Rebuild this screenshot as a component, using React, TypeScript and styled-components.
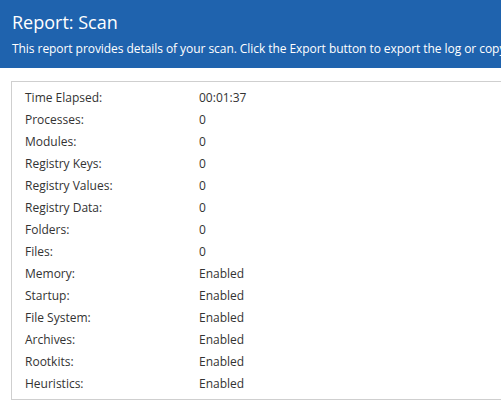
import styled, { createGlobalStyle } from 'styled-components';

const Global = createGlobalStyle`
  html, body {
    margin: 0;
    padding: 0;
    background: #fff;
    overflow: hidden;
  }
  body {
    font-family: "Open Sans", "DejaVu Sans", sans-serif;
  }
`;

const Page = styled.div`
  width: 501px;
  height: 405px;
  overflow: hidden;
`;

const Header = styled.header`
  background: #1f63ae;
  color: #fff;
  height: 68px;
  box-sizing: border-box;
  padding: 9px 0 0 12px;
  white-space: nowrap;
  overflow: hidden;
`;

const Title = styled.h1`
  margin: 0;
  font-size: 18px;
  font-weight: 400;
  line-height: 26px;
`;

const Subtitle = styled.p`
  margin: 5px 0 0;
  font-size: 12px;
  line-height: 18px;
  letter-spacing: -0.06px;
`;

const Panel = styled.section`
  margin: 13px 0 0 11px;
  width: 600px;
  border: 1px solid #cfcfcf;
  padding: 4px 0 5px 13px;
`;

const Row = styled.div`
  display: grid;
  grid-template-columns: 174px 1fr;
  height: 22px;
  align-items: center;
  font-size: 12px;
  color: #333;
`;

const stats: [string, string][] = [
  ['Time Elapsed:', '00:01:37'],
  ['Processes:', '0'],
  ['Modules:', '0'],
  ['Registry Keys:', '0'],
  ['Registry Values:', '0'],
  ['Registry Data:', '0'],
  ['Folders:', '0'],
  ['Files:', '0'],
  ['Memory:', 'Enabled'],
  ['Startup:', 'Enabled'],
  ['File System:', 'Enabled'],
  ['Archives:', 'Enabled'],
  ['Rootkits:', 'Enabled'],
  ['Heuristics:', 'Enabled'],
];

export default function App() {
  return (
    <Page>
      <Global />
      <Header>
        <Title>Report: Scan</Title>
        <Subtitle>
          This report provides details of your scan. Click the Export button to export the log or copy it to the clipboard.
        </Subtitle>
      </Header>
      <Panel>
        {stats.map(([label, value]) => (
          <Row key={label}>
            <span>{label}</span>
            <span>{value}</span>
          </Row>
        ))}
      </Panel>
    </Page>
  );
}
